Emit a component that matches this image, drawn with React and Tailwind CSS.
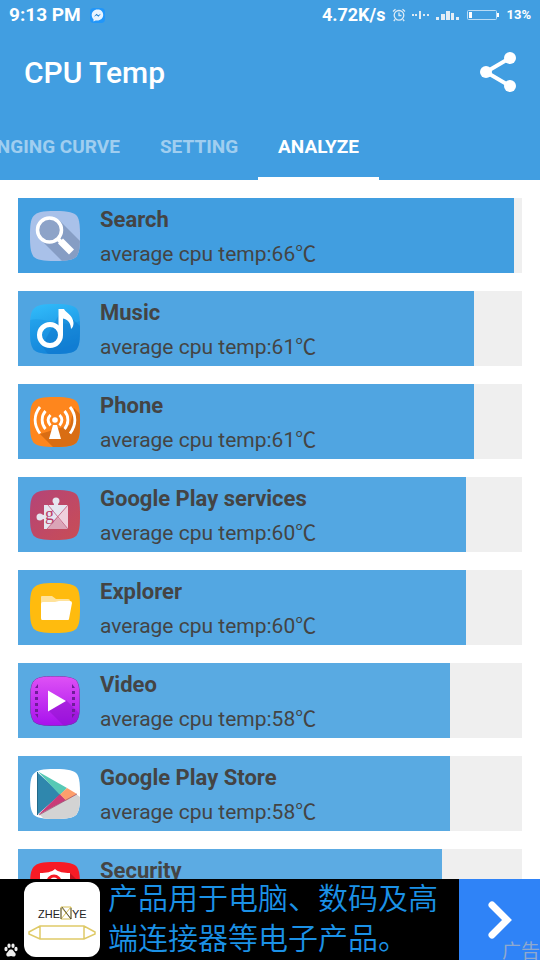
import { useState } from "react";

const TABS = ["CHANGING CURVE", "SETTING", "ANALYZE"];

// Rounded tile every launcher icon sits on.
const TILE =
  "M25 0C39 0 44 1.500 47 5C49.500 9 50 14 50 25S49.500 41 46.500 45.500C43 49 37 50 25 50S7 49 3.500 45.500C.5 41 0 36 0 25S.5 9 3.500 5C7 1 12 0 25 0Z";

function Tile({ id, fill, children }) {
  return (
    <svg viewBox="0 0 50 50" className="size-[50px] shrink-0" aria-hidden="true">
      <defs>
        <clipPath id={`${id}-clip`}>
          <path d={TILE} />
        </clipPath>
      </defs>
      <g clipPath={`url(#${id}-clip)`}>
        <rect width="50" height="50" fill={fill} />
        {children}
      </g>
    </svg>
  );
}

function SearchIcon() {
  return (
    <Tile id="search" fill="#a9c1e9">
      <path d="M29 9 50 30V50H32L10 28Z" fill="#869dc4" />
      <circle cx="19.500" cy="19" r="12" fill="#8da3c8" stroke="#fff" strokeWidth="3.500" />
      <path d="M27 27 32 32" stroke="#fff" strokeWidth="4" />
      <path d="M30.500 30 41.500 41" stroke="#fff" strokeWidth="7" />
    </Tile>
  );
}

function MusicIcon() {
  return (
    <Tile id="music" fill="url(#music-bg)">
      <defs>
        <linearGradient id="music-bg" x1="0" y1="0" x2="0.300" y2="1">
          <stop offset="0" stopColor="#32bdfb" />
          <stop offset="1" stopColor="#1689dc" />
        </linearGradient>
      </defs>
      <path d="M0 16C14 12 32 25 50 17V50H0Z" fill="#0f80d6" opacity="0.250" />
      <path d="M32 5 50 22V50H18L12 42Z" fill="#0968bd" opacity="0.280" />
      <circle cx="20" cy="31" r="10.500" fill="none" stroke="#fff" strokeWidth="5" />
      <path
        d="M28.500 31V5H34C36 9 43 11 43.500 19C43.500 22 42.500 24 41 25C41 20 38 15 33 14.500V31Z"
        fill="#fff"
      />
    </Tile>
  );
}

function PhoneIcon() {
  return (
    <Tile id="phone" fill="#fe861d">
      <path d="M44 11 50 17V50H23L10 37 40 28Z" fill="#d96d13" />
      <g fill="none" stroke="#fff" strokeWidth="2.800">
        <path d="M20.500 18C17.500 21 17.500 25 20.500 28.500M29.500 18C32.500 21 32.500 25 29.500 28.500" />
        <path d="M15.500 14C11 19 11 27 15.500 32M34.500 14C39 19 39 27 34.500 32" />
        <path d="M10 10C3.500 18 3.500 28 10 36.500M40 10C46.500 18 46.500 28 40 36.500" />
      </g>
      <circle cx="25" cy="23" r="2.800" fill="#fff" />
      <path d="M23 28H27L31 42H19Z" fill="#fff" />
    </Tile>
  );
}

function PlayServicesIcon() {
  return (
    <Tile id="services" fill="url(#services-bg)">
      <defs>
        <linearGradient id="services-bg" x1="0" y1="0" x2="1" y2="1">
          <stop offset="0" stopColor="#b44478" />
          <stop offset="1" stopColor="#c94d55" />
        </linearGradient>
      </defs>
      <path
        d="M14 15H24C24 13 22.500 13 22.500 11A3.500 3.500 0 0 1 29.500 11C29.500 13 28 13 28 15H38V39H14V29C12 29 12 30.500 10 30.500A3.500 3.500 0 0 1 10 23.500C12 23.500 12 25 14 25Z"
        fill="#e5e6f0"
      />
      <path d="M38 15V39L27 27Z" fill="#efd0dc" />
      <path d="M38 39H17L27 27Z" fill="#dba5b7" />
      <path d="M18 15 38 39M38 15 17 39" stroke="#bf5778" strokeWidth="0.800" />
      <text x="15" y="30" fontSize="18" fontFamily="Liberation Serif, serif" fill="#ba4069">
        g
      </text>
    </Tile>
  );
}

function ExplorerIcon() {
  return (
    <Tile id="explorer" fill="#ffbb0e">
      <path d="M11 14Q11 13 12 13H22L26 16H38Q40 16 40 18V24L11 35Z" fill="#ffe29a" />
      <path d="M13 19H25L29 18H40Q42 18 42 20L39 36Q39 37 38 37H12Q11 37 11 35V21Q11 19 13 19Z" fill="#fff" />
    </Tile>
  );
}

function VideoIcon() {
  return (
    <Tile id="video" fill="url(#video-bg)">
      <defs>
        <linearGradient id="video-bg" x1="0" y1="0" x2="0" y2="1">
          <stop offset="0" stopColor="#df52f5" />
          <stop offset="1" stopColor="#a711ed" />
        </linearGradient>
      </defs>
      <path d="M36 24 50 38V50H34L18 34Z" fill="#8910c8" opacity="0.450" />
      <path d="M5 12 8 8V12ZM45 12 42 8V12Z" fill="#6f1c99" />
      <g fill="#6f1c99">
        {[15, 21, 27, 33].map((y) => (
          <g key={y}>
            <rect x="5" y={y} width="3" height="3" />
            <rect x="42" y={y} width="3" height="3" />
          </g>
        ))}
      </g>
      <path d="M5 38H8V42ZM45 38H42V42Z" fill="#6f1c99" />
      <path d="M18 14.500 36 25 18 35.500Z" fill="#fff" />
      <path d={TILE} fill="none" stroke="#5b4d9b" strokeWidth="1" />
    </Tile>
  );
}

function PlayStoreIcon() {
  return (
    <Tile id="store" fill="#fff">
      <path d="M46 25 50 28V50H14L9 45Z" fill="#d3d3d3" />
      <path d="M7 3V46L31 25Z" fill="#2f87ad" />
      <path d="M8 2.500 37 19 30 26Z" fill="#57c9b5" />
      <path d="M8 46 30 25 36 31Z" fill="#c93b78" />
      <path d="M37 19 47 25 36 31.500 30 25.500Z" fill="#fd9f6c" />
      <path d="M7.500 3V46" stroke="#226989" strokeWidth="1" />
      <path d="M9 46 47 25" stroke="#8e3b62" strokeWidth="0.600" />
    </Tile>
  );
}

function SecurityIcon() {
  return (
    <Tile id="security" fill="#f71b25">
      <path d="M40 11 50 21V50H15Z" fill="#c31420" />
      <path d="M25 7C28 10 34 11 40 11V25C40 34 33 40 25 43C17 40 10 34 10 25V11C16 11 22 10 25 7Z" fill="#fff" />
      <circle cx="24" cy="20" r="6" fill="none" stroke="#f71b25" strokeWidth="3" />
    </Tile>
  );
}

const APPS = [
  { name: "Search", temp: 66, fill: 98.4, color: "bg-[#419ee0]", Icon: SearchIcon },
  { name: "Music", temp: 61, fill: 90.5, color: "bg-[#50a5e1]", Icon: MusicIcon },
  { name: "Phone", temp: 61, fill: 90.5, color: "bg-[#50a5e1]", Icon: PhoneIcon },
  { name: "Google Play services", temp: 60, fill: 88.9, color: "bg-[#53a7e2]", Icon: PlayServicesIcon },
  { name: "Explorer", temp: 60, fill: 88.9, color: "bg-[#53a7e2]", Icon: ExplorerIcon },
  { name: "Video", temp: 58, fill: 85.7, color: "bg-[#59aae2]", Icon: VideoIcon },
  { name: "Google Play Store", temp: 58, fill: 85.7, color: "bg-[#59aae2]", Icon: PlayStoreIcon },
  { name: "Security", temp: 57, fill: 84.1, color: "bg-[#5cabe3]", Icon: SecurityIcon },
];

function StatusBar() {
  return (
    <div className="flex h-[30px] items-center justify-between px-[9px]">
      <div className="flex items-center gap-[9px]">
        <span className="text-[19px] leading-[30px] font-bold">9:13 PM</span>
        <svg viewBox="0 0 15 15" className="size-[15px]" aria-hidden="true">
          <rect width="15" height="15" rx="4" fill="#2196f9" />
          <path d="M7.500 1.500C4 1.500 1.700 4 1.700 7C1.700 9 2.500 10.300 3.500 11.200V13.500L5.600 12.400C10 13.200 13.200 10.500 13.200 7S11 1.500 7.500 1.500Z" fill="#e9f4ff" />
          <path d="M3.800 8.700 6.600 5.700 8.200 7.300 11 5.700 8.400 8.800 6.700 7.200Z" fill="#1b7fd3" />
        </svg>
      </div>
      <div className="flex items-center">
        <span className="text-[18px] leading-[30px] font-bold">4.72K/s</span>
        <svg viewBox="0 0 14 14" className="ml-[7px] size-[14px]" fill="none" stroke="#dcebf6" aria-hidden="true">
          <circle cx="7" cy="7.300" r="4.800" strokeWidth="1.300" />
          <path d="M7 4.500V7.500H9.500M1 3.500 3.500 1.200M13 3.500 10.500 1.200M3 11.500 1.800 13M11 11.500 12.200 13" strokeWidth="1.300" />
        </svg>
        <svg viewBox="0 0 17 8" className="ml-[6px] h-[8px] w-[17px]" fill="#dde9f2" aria-hidden="true">
          <path d="M0 3H2V5H0ZM3 3H5V5H3ZM7 0H9V8H7ZM11 3H13V5H11ZM15 3H17V5H15Z" />
        </svg>
        <svg viewBox="0 0 23 10" className="ml-[7px] h-[10px] w-[23px]" fill="#e3edf5" aria-hidden="true">
          <path d="M0 7H3V10H0ZM5 4H9V10H5ZM10 1H14V10H10ZM15 3H18V10H15ZM20 7H23V10H20Z" />
        </svg>
        <svg viewBox="0 0 32 10" className="ml-[8px] h-[10px] w-[32px]" aria-hidden="true">
          <rect x="0.500" y="0.500" width="29" height="9" rx="1" fill="none" stroke="#b9dcf5" />
          <path d="M2 2H5V8H2ZM30 3H32V7H30Z" fill="#fff" />
        </svg>
        <span className="ml-[7px] text-[13px] leading-[30px] font-bold">13%</span>
      </div>
    </div>
  );
}

function AppRow({ app }) {
  const { Icon } = app;
  return (
    <li className="h-[75px] shrink-0 bg-[#efefef]">
      <div
        className={`flex h-full items-center gap-5 pl-3 whitespace-nowrap ${app.color}`}
        style={{ width: `${app.fill}%` }}
      >
        <Icon />
        <div className="pt-[2px] text-[#444]">
          <h2 className="text-[22px] leading-[34px] font-bold">{app.name}</h2>
          <p className="text-[21px] leading-[34px]">average cpu temp:{app.temp}℃</p>
        </div>
      </div>
    </li>
  );
}

function AdBanner() {
  return (
    <a href="#ad" className="relative flex h-[81px] shrink-0 items-stretch bg-black pl-6">
      <span className="my-[3px] flex w-[76px] shrink-0 items-center justify-center rounded-[12px] bg-white">
        <svg viewBox="0 0 76 75" className="h-[75px] w-[76px]" aria-label="ZHENYE">
          <g fontFamily="Liberation Sans, sans-serif" fontSize="11" fill="#222">
            <text x="14" y="36">ZHE</text>
            <text x="48" y="36">YE</text>
          </g>
          <path d="M37 25V37H47V25ZM37 25 47 37M47 25 37 37" fill="none" stroke="#d6bf56" />
          <path d="M37 26V37M38 25 47 37V26" fill="none" stroke="#333" strokeWidth="0.800" />
          <path d="M5 50 16 44H60L71 50V52L60 57H16L5 52ZM16 44V57M60 44V57" fill="none" stroke="#dfca68" strokeWidth="1.500" />
        </svg>
      </span>
      <p className="ml-2 w-[351px] min-w-0 self-center pr-[12px] pb-[7px] font-['Noto_Sans_CJK_SC',sans-serif] text-[30px] leading-[40px] font-[350] text-[#1b91e6]">
        产品用于电脑、数码及高端连接器等电子产品。
      </p>
      <span className="ml-auto flex w-[81px] shrink-0 items-center justify-center bg-[#2f83f7]">
        <svg viewBox="0 0 24 40" className="h-[40px] w-[24px]" aria-hidden="true">
          <path d="M4 5 19 20 4 35" fill="none" stroke="#fff" strokeWidth="7" strokeLinecap="round" />
        </svg>
      </span>
      <svg viewBox="0 0 14 14" className="absolute bottom-[3px] left-[4px] size-[14px]" fill="#eee" aria-hidden="true">
        <ellipse cx="2" cy="6" rx="1.600" ry="2.200" />
        <ellipse cx="5" cy="2.700" rx="1.600" ry="2.300" />
        <ellipse cx="9" cy="2.700" rx="1.600" ry="2.300" />
        <ellipse cx="12" cy="6" rx="1.600" ry="2.200" />
        <path d="M7 6.500C4.500 6.500 4.500 8.500 3 9.800C1.500 11.500 2.500 14 5 13.500L7 13L9 13.500C11.500 14 12.500 11.500 11 9.800C9.500 8.500 9.500 6.500 7 6.500Z" />
      </svg>
      <span className="absolute right-0 bottom-0 font-['Noto_Sans_CJK_SC',sans-serif] text-[19px] leading-[20px] text-[#8fa9cd]">
        广告
      </span>
    </a>
  );
}

export default function App() {
  const [active, setActive] = useState("ANALYZE");

  return (
    <div className="flex h-screen flex-col overflow-hidden bg-white font-[Roboto,'Noto_Sans_CJK_SC',sans-serif]">
      <header className="shrink-0 bg-[#419ee1] text-white">
        <StatusBar />
        <div className="flex h-[84px] items-center justify-between pr-[22px] pl-6">
          <h1 className="pt-[2px] text-[30px] leading-[40px] font-medium">CPU Temp</h1>
          <button type="button" aria-label="Share">
            <svg viewBox="0 0 40 42" className="h-[42px] w-[40px]" fill="#fff" aria-hidden="true">
              <path d="M32 7 8 21 32 35" fill="none" stroke="#fff" strokeWidth="4" />
              <circle cx="8" cy="21" r="6" />
              <circle cx="32" cy="7" r="6" />
              <circle cx="32" cy="35" r="6" />
            </svg>
          </button>
        </div>
        <nav className="flex h-[66px] justify-end overflow-hidden pr-[161px]">
          {TABS.map((tab) => (
            <button
              key={tab}
              type="button"
              onClick={() => setActive(tab)}
              className={`shrink-0 border-b-[3px] px-5 pt-[3px] text-[19px] font-bold whitespace-nowrap ${
                active === tab ? "border-white text-white" : "border-transparent text-white/50"
              }`}
            >
              {tab}
            </button>
          ))}
        </nav>
      </header>

      <main className="min-h-0 flex-1 overflow-hidden">
        <ul className="flex flex-col gap-[18px] p-[18px]">
          {APPS.map((app) => (
            <AppRow key={app.name} app={app} />
          ))}
        </ul>
      </main>

      <AdBanner />
    </div>
  );
}
